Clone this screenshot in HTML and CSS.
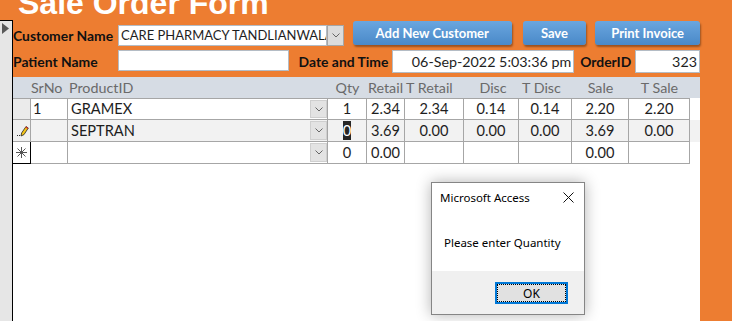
FILE: index.html
```html
<!DOCTYPE html>
<html lang="en">
<head>
  <meta charset="UTF-8">
  <title>Sale Order Form</title>
  <link rel="stylesheet" href="styles.css">
</head>
<body>
  <!-- Form title (clipped at the top of the window) -->
  <div class="title-strip">
    <h1 class="title">Sale Order Form</h1>
  </div>

  <div class="body-row">
    <!-- Main form record selector -->
    <div class="rec-bar">
      <svg width="7" height="11" viewBox="0 0 7 11"><polygon points="0,0 7,5.5 0,11" fill="#5a5a5a"/></svg>
    </div>

    <div class="form">
      <!-- Form header -->
      <div class="form-head">
        <div class="row row-top">
          <label class="lbl">Customer Name</label>
          <div class="combo">
            <span class="combo-text">CARE PHARMACY TANDLIANWALA</span>
            <span class="combo-btn">
              <svg width="8" height="5" viewBox="0 0 8 5"><polyline points="0.5,0.5 4,4 7.5,0.5" fill="none" stroke="#666" stroke-width="1"/></svg>
            </span>
          </div>
          <button class="btn btn-add">Add New Customer</button>
          <button class="btn btn-save">Save</button>
          <button class="btn btn-print">Print Invoice</button>
        </div>
        <div class="row row-bottom">
          <label class="lbl">Patient Name</label>
          <div class="field field-patient"></div>
          <label class="lbl lbl-date">Date and Time</label>
          <div class="field field-date">06-Sep-2022 5:03:36 pm</div>
          <label class="lbl lbl-order">OrderID</label>
          <div class="field field-order">323</div>
        </div>
      </div>

      <!-- Order lines subform -->
      <div class="sheet">
        <div class="sheet-head grid">
          <span></span>
          <span class="h-srno">SrNo</span>
          <span class="h-product">ProductID</span>
          <span class="h-center">Qty</span>
          <span class="h-retail">Retail</span>
          <span class="h-tretail">T Retail</span>
          <span class="h-disc">Disc</span>
          <span class="h-tdisc">T Disc</span>
          <span class="h-center">Sale</span>
          <span class="h-center">T Sale</span>
        </div>

        <div class="sheet-row grid first">
          <span class="cell sel"></span>
          <span class="cell srno">1</span>
          <span class="cell product"><span class="product-text">GRAMEX</span><span class="drop"><svg width="8" height="5" viewBox="0 0 8 5"><polyline points="0.5,0.5 4,4 7.5,0.5" fill="none" stroke="#666" stroke-width="1"/></svg></span></span>
          <span class="cell">1</span>
          <span class="cell">2.34</span>
          <span class="cell">2.34</span>
          <span class="cell">0.14</span>
          <span class="cell">0.14</span>
          <span class="cell">2.20</span>
          <span class="cell">2.20</span>
        </div>

        <div class="sheet-row grid alt">
          <span class="cell sel">
            <svg width="14" height="12" viewBox="0 0 14 12">
              <rect x="1" y="10" width="1" height="1" fill="#333"/>
              <rect x="3" y="10" width="1" height="1" fill="#333"/>
              <polygon points="5,11 5.6,8 10,1.5 12.3,3 8,9.6" fill="#f5c518" stroke="#222" stroke-width="0.8"/>
              <polygon points="10,1.5 12.3,3 11.7,4 9.4,2.5" fill="#d9302c"/>
            </svg>
          </span>
          <span class="cell srno"></span>
          <span class="cell product"><span class="product-text">SEPTRAN</span><span class="drop"><svg width="8" height="5" viewBox="0 0 8 5"><polyline points="0.5,0.5 4,4 7.5,0.5" fill="none" stroke="#666" stroke-width="1"/></svg></span></span>
          <span class="cell"><span class="picked">0</span></span>
          <span class="cell">3.69</span>
          <span class="cell">0.00</span>
          <span class="cell">0.00</span>
          <span class="cell">0.00</span>
          <span class="cell">3.69</span>
          <span class="cell">0.00</span>
        </div>

        <div class="sheet-row grid">
          <span class="cell sel sel-new">
            <svg width="11" height="11" viewBox="0 0 11 11" stroke="#555" stroke-width="1">
              <line x1="5.5" y1="0" x2="5.5" y2="11"/>
              <line x1="0" y1="5.5" x2="11" y2="5.5"/>
              <line x1="1.5" y1="1.5" x2="9.5" y2="9.5"/>
              <line x1="9.5" y1="1.5" x2="1.5" y2="9.5"/>
            </svg>
          </span>
          <span class="cell srno"></span>
          <span class="cell product"><span class="product-text"></span><span class="drop"><svg width="8" height="5" viewBox="0 0 8 5"><polyline points="0.5,0.5 4,4 7.5,0.5" fill="none" stroke="#666" stroke-width="1"/></svg></span></span>
          <span class="cell">0</span>
          <span class="cell">0.00</span>
          <span class="cell"></span>
          <span class="cell"></span>
          <span class="cell"></span>
          <span class="cell">0.00</span>
          <span class="cell"></span>
        </div>
      </div>
    </div>

    <div class="right-fill"></div>
  </div>

  <!-- Message box -->
  <div class="dialog">
    <div class="dlg-title">
      <span>Microsoft Access</span>
      <svg width="11" height="11" viewBox="0 0 11 11" stroke="#111" stroke-width="1"><line x1="0.5" y1="0.5" x2="10.5" y2="10.5"/><line x1="10.5" y1="0.5" x2="0.5" y2="10.5"/></svg>
    </div>
    <div class="dlg-body">Please enter Quantity</div>
    <div class="dlg-foot">
      <button class="ok-btn">OK</button>
    </div>
  </div>
</body>
</html>
```

FILE: styles.css
```css
/* General */
body {
  margin: 0;
  width: 732px;
  height: 321px;
  overflow: hidden;
  position: relative;
  background-color: #ed7d31;
  font-family: Lato, 'Liberation Sans', sans-serif;
  color: #1e1e1e;
}

/* Title */
.title-strip {
  height: 20px;
  overflow: hidden;
  padding-left: 18px;
}

.title {
  margin: -13px 0 0;
  font-family: 'Liberation Sans', Arial, sans-serif;
  font-size: 32px;
  line-height: 32px;
  font-weight: bold;
  color: #fff;
  white-space: nowrap;
}

.body-row {
  display: flex;
  height: 301px;
}

.rec-bar {
  box-sizing: border-box;
  width: 13px;
  background-color: #e6e6e6;
  border-top: 1px solid #000;
  border-right: 1px solid #000;
  padding: 2px 0 0 2px;
}

.rec-bar svg {
  display: block;
}

.form {
  width: 687px;
  display: flex;
  flex-direction: column;
}

.right-fill {
  flex: 1;
}

/* Form header */
.form-head {
  height: 57px;
  box-sizing: border-box;
  padding-top: 1px;
}

.row {
  display: flex;
}

.row-top {
  height: 25px;
  align-items: flex-end;
}

.row-bottom {
  height: 23px;
  margin-top: 4px;
  align-items: center;
}

.lbl {
  width: 105px;
  flex-shrink: 0;
  font-size: 13.9px;
  font-weight: bold;
  line-height: 21px;
  color: #111;
  white-space: nowrap;
}

.lbl-date {
  width: 93px;
  margin-left: 10px;
}

.lbl-order {
  width: 55px;
  padding-left: 6px;
}

.combo {
  display: flex;
  height: 21px;
}

.combo-text {
  box-sizing: border-box;
  width: 209px;
  height: 21px;
  background-color: #fff;
  border: 1px solid #b4bcc5;
  padding-left: 2px;
  font-size: 13px;
  line-height: 19px;
  white-space: nowrap;
  overflow: hidden;
}

.combo-btn {
  box-sizing: border-box;
  width: 17px;
  height: 21px;
  background-color: #dcdcdc;
  border: 1px solid #a6a6a6;
  display: flex;
  align-items: center;
  justify-content: center;
}

.btn {
  box-sizing: border-box;
  height: 24px;
  margin-bottom: 1px;
  border: none;
  border-radius: 3px;
  background: linear-gradient(#6aa6df, #4a89c8);
  box-shadow: 1px 2px 2px rgba(0, 0, 0, 0.35);
  color: #fff;
  font-family: Lato, sans-serif;
  font-size: 13px;
  font-weight: bold;
  padding: 0;
}

.btn-add {
  width: 159px;
  margin-left: 9px;
}

.btn-save {
  width: 64px;
  margin-left: 11px;
}

.btn-print {
  width: 105px;
  margin-left: 9px;
}

.field {
  box-sizing: border-box;
  height: 23px;
  background-color: #fff;
  border: 1px solid #b4bcc5;
  font-size: 14.3px;
  line-height: 21px;
  text-align: right;
  padding-right: 2px;
  white-space: nowrap;
}

.field-patient {
  width: 171px;
  height: 21px;
  align-self: flex-start;
}

.field-date {
  width: 183px;
}

.field-order {
  width: 65px;
}

/* Datasheet */
.sheet {
  flex: 1;
  background-color: #fff;
}

.grid {
  display: grid;
  grid-template-columns: 18px 37px 260px 39px 38px 59px 55px 53px 57px 61px;
}

.sheet-head {
  height: 21px;
  background-color: #d6dce4;
  font-size: 14.3px;
  line-height: 21px;
  color: #6a6a6a;
  white-space: nowrap;
}

.h-srno {
  padding-left: 0;
}

.h-product {
  padding-left: 1px;
}

.h-center {
  text-align: center;
}

.h-retail {
  padding-left: 1px;
}

.h-tretail {
  padding-left: 1px;
}

.h-disc {
  text-align: center;
  padding-left: 3px;
}

.h-tdisc {
  padding-left: 3px;
}

.sheet-row {
  height: 22px;
}

.alt {
  background-color: #f2f2f2;
}

.cell {
  box-sizing: border-box;
  height: 22px;
  border-right: 1px solid #a6a6a6;
  border-bottom: 1px solid #a6a6a6;
  font-size: 14.6px;
  line-height: 21px;
  text-align: center;
  white-space: nowrap;
  overflow: hidden;
}

.first .cell {
  border-top: 1px solid #a6a6a6;
  line-height: 20px;
}

.srno {
  text-align: left;
  padding-left: 2px;
}

.sel {
  background-color: #ebebeb;
  display: flex;
  align-items: center;
  justify-content: center;
}

.alt .sel {
  background-color: #f0f0f0;
  justify-content: flex-start;
  padding-left: 3px;
}

.sel-new {
  background-color: #fff;
  border-right-color: #000;
  border-bottom-color: #000;
}

.product {
  display: flex;
  text-align: left;
}

.product-text {
  flex: 1;
  padding-left: 3px;
}

.drop {
  box-sizing: border-box;
  width: 17px;
  margin: 1px 0;
  background-color: #e3e3e3;
  border: 1px solid #cfcfcf;
  display: flex;
  align-items: center;
  justify-content: center;
}

.picked {
  background-color: #262626;
  color: #fff;
  padding: 1px 0;
}

/* Message box */
.dialog {
  position: absolute;
  left: 431px;
  top: 182px;
  width: 154px;
  box-sizing: border-box;
  border: 1px solid #858585;
  background-color: #fff;
  box-shadow: 0 0 14px rgba(0, 0, 0, 0.3);
  font-family: 'Noto Sans', 'Open Sans', sans-serif;
  font-size: 11.5px;
  color: #000;
}

.dlg-title {
  height: 30px;
  display: flex;
  align-items: center;
  justify-content: space-between;
  padding: 0 10px 1px 8px;
  box-sizing: border-box;
}

.dlg-body {
  height: 58px;
  box-sizing: border-box;
  padding: 0 0 0 12px;
  display: flex;
  align-items: center;
}

.dlg-foot {
  height: 43px;
  box-sizing: border-box;
  background-color: #f0f0f0;
  padding: 11px 16px 0 0;
  display: flex;
  justify-content: flex-end;
  align-items: flex-start;
}

.ok-btn {
  width: 73px;
  height: 22px;
  box-sizing: border-box;
  border: 2px solid #0078d7;
  background-color: #e1e1e1;
  outline: 1px dotted #000;
  outline-offset: -3px;
  font-family: 'Noto Sans', sans-serif;
  font-size: 12px;
  color: #000;
  padding: 0;
}
```
